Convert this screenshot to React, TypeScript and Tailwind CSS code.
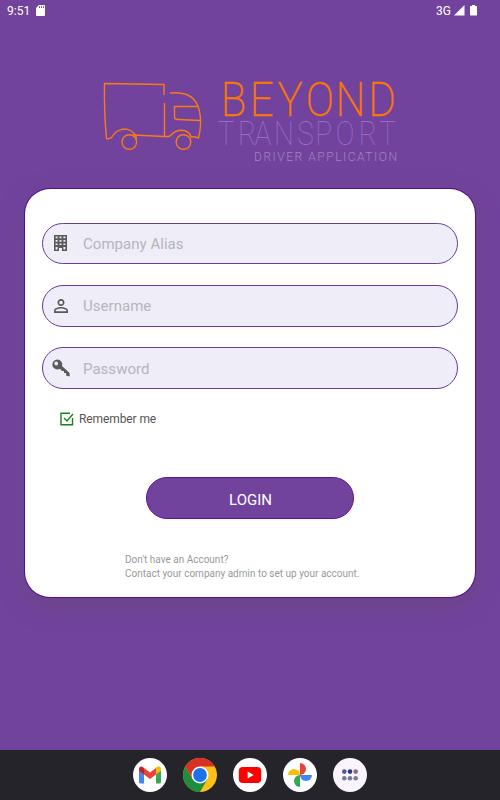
import type { ReactNode } from "react";

const fields: { label: string; type: string; icon: ReactNode }[] = [
  {
    label: "Company Alias",
    type: "text",
    icon: (
      <svg viewBox="0 0 13 16" className="h-4 w-[13px]">
        <path
          fillRule="evenodd"
          fill="#5a5a5a"
          d="M0 0h13v16H8v-3H5v3H0zM1.6 1.6v1.7h2V1.6zm3.9 0v1.7h2V1.6zm3.9 0v1.7h2V1.6zM1.6 5v1.7h2V5zm3.9 0v1.7h2V5zm3.9 0v1.7h2V5zM1.6 8.4v1.7h2V8.4zm3.9 0v1.7h2V8.4zm3.9 0v1.7h2V8.4zM1.6 12v2.4h2V12zm7.8 0v2.4h2V12z"
        />
      </svg>
    ),
  },
  {
    label: "Username",
    type: "text",
    icon: (
      <svg viewBox="4 4 16 16" className="h-[14px] w-[14px]" fill="#5a5a5a">
        <path d="M12 5.9a2.1 2.1 0 1 1 0 4.2 2.1 2.1 0 0 1 0-4.2m0 9c2.97 0 6.1 1.46 6.1 2.1v1.1H5.9V17c0-.64 3.13-2.1 6.1-2.1M12 4C9.79 4 8 5.79 8 8s1.79 4 4 4 4-1.79 4-4-1.79-4-4-4m0 9c-2.67 0-8 1.34-8 4v3h16v-3c0-2.66-5.33-4-8-4" />
      </svg>
    ),
  },
  {
    label: "Password",
    type: "password",
    icon: (
      <svg viewBox="0 0 18 18" className="h-[18px] w-[18px]">
        <path
          fillRule="evenodd"
          fill="#5a5a5a"
          d="M5.300.4a5 5 0 1 0 .1 10c.9 0 1.700-.2 2.400-.6l2.200 2.200h2v2h2l.3 2.800 3.300.6v-3.300L10 6.900A5 5 0 0 0 5.300.4M4.200 2.600a1.900 1.900 0 1 1 0 3.800 1.900 1.900 0 0 1 0-3.800"
        />
      </svg>
    ),
  },
];

function StatusBar() {
  return (
    <div className="flex h-[21px] items-center justify-between pr-[22px] pl-[7px] text-[12px] leading-5 text-white">
      <div className="flex items-center gap-[6px]">
        <span>9:51</span>
        <svg viewBox="0 0 9 11" className="h-[11px] w-[9px]">
          <path
            fill="#fff"
            fillRule="evenodd"
            d="M3 0h5a1 1 0 0 1 1 1v9a1 1 0 0 1-1 1H1a1 1 0 0 1-1-1V3zM3 1.300v1.800h1V1.300zm2 0v1.800h1V1.300zm2 0v1.800h1V1.300z"
          />
        </svg>
      </div>
      <div className="flex items-center">
        <span>3G</span>
        <svg viewBox="0 0 24 11" className="ml-[3px] h-[11px] w-6" fill="#fff">
          <path d="M0 10.500 10.500 0v10.500z" />
          <path d="M18 0h3v1h1.500q.5 0 .5.500v8.500q0 .5-.5.500h-6q-.5 0-.5-.5V1.500q0-.5.5-.5H18z" />
        </svg>
      </div>
    </div>
  );
}

function Logo() {
  return (
    <svg viewBox="96 74 308 94" className="ml-24 h-[94px] w-[308px] overflow-visible">
      <g fill="none" stroke="#f87a18" strokeWidth="1.400" strokeLinecap="round" strokeLinejoin="round">
        <path d="M164 94.500V84.500L104.500 83.500Q104 112 106.500 138.500Q109.500 139.500 112 137C116 130 124 127 130.500 130.500Q135 133 136.500 138" />
        <path d="M164.500 103.500V136.500L133 135" />
        <circle cx="129.300" cy="142" r="7.300" />
        <path d="M164.500 136.500H169C173 134 174 130.500 181 130.300C187 130.500 190 133 191 137C194 136 197 137.500 198.500 138C202 124 201.500 108 193.500 99C187.500 93 180 92 170.500 93" />
        <path d="M198 106.500H174.500V117Q174.500 119.500 178 119.500L200 120.500" />
        <circle cx="183.500" cy="142" r="7.300" />
      </g>
      <g fontFamily="Roboto, sans-serif">
        <text
          transform="translate(216 0) scale(.86 1)"
          x="5.400 39.200 71.500 104.500 139 177"
          y="116"
          fontSize="49"
          fontWeight="200"
          fill="#fb7607"
          stroke="#fb7607"
          strokeWidth=".3"
        >
          BEYOND
        </text>
        <text
          transform="translate(216 0) scale(.82 1)"
          x="2 26.800 47 70.700 99 121 146 174 199"
          y="145.500"
          fontSize="34"
          fontWeight="100"
          fill="#9a6bc9"
        >
          TRANSPORT
        </text>
        <text x="254" y="161" fontSize="12" fontWeight="300" fill="#a085be" textLength="143">
          DRIVER APPLICATION
        </text>
      </g>
    </svg>
  );
}

function LoginCard() {
  return (
    <form className="mx-[25px] mt-[21px] flex h-[408px] flex-col rounded-[25px] bg-white px-[17px] pt-[33.500px] shadow-[0_0_0_1px_#560b91,0_8px_22px_#6b4684]">
      <div className="flex flex-col gap-[20.900px]">
        {fields.map((field) => (
          <label
            key={field.label}
            className="flex h-[41.600px] items-center rounded-full border border-[#6a3aa0] bg-[#efedf8]"
          >
            <span className="flex w-[35px] items-center justify-center">{field.icon}</span>
            <input
              type={field.type}
              placeholder={field.label}
              className="ml-[5px] w-72 bg-transparent pt-px text-[15px] tracking-[0.03px] text-gray-600 outline-none placeholder:text-[#b6b5b9]"
            />
          </label>
        ))}
      </div>

      <div className="mt-[22.300px] ml-[18px] flex h-4 items-center gap-[5px] text-[12px] tracking-[-0.1px] text-[#555]">
        <svg viewBox="0 0 14 14" className="h-[14px] w-[14px]" fill="none" stroke="#188018" strokeWidth="1.400">
          <path d="M10 1.200H1v11.600h11.500V6" />
          <path d="m4 6 3 3 6-7" />
        </svg>
        <span>Remember me</span>
      </div>

      <button
        type="button"
        className="mt-[50px] h-[42px] w-[208px] self-center rounded-full border border-[#5c1598] bg-[#71439d] pt-[3px] pl-px text-[15px] text-white"
      >
        LOGIN
      </button>

      <div className="mt-[34px] ml-[83px] text-[10px] leading-[14px] text-[#999]">
        <p>Don't have an Account?</p>
        <p>Contact your company admin to set up your account.</p>
      </div>
    </form>
  );
}

function GmailIcon() {
  return (
    <svg viewBox="0 0 34 34" className="h-[34px] w-[34px]">
      <circle cx="17" cy="17" r="17" fill="#fff" />
      <path fill="#4285f4" d="M6 12v12a1.500 1.500 0 0 0 1.500 1.500H11V15z" />
      <path fill="#34a853" d="M23 15v10.500h3.500A1.500 1.500 0 0 0 28 24V12z" />
      <path fill="#fbbc04" d="M23 10v6.500l5-3.700V11c0-2.500-2.500-3.500-4.500-2z" />
      <path fill="#ea4335" d="M11 16.500V10l6 4.500 6-4.500v6.500L17 21z" />
      <path fill="#c5221f" d="M6 11v1.800l5 3.700V10l-1-.8C8 7.800 6 9 6 11" />
    </svg>
  );
}

function ChromeIcon() {
  return (
    <svg viewBox="0 0 34 34" className="h-[34px] w-[34px]">
      <circle cx="17" cy="17" r="17" fill="#fbc116" />
      <path fill="#1e8e3e" d="M2.280 8.500A17 17 0 0 0 17 34l7.360-12.750L17 17 9.640 21.250z" />
      <path fill="#d93025" d="M2.280 8.500a17 17 0 0 1 29.440 0H17v8.500l-7.360 4.250z" />
      <circle cx="17" cy="17" r="8.500" fill="#fff" />
      <circle cx="17" cy="17" r="6.900" fill="#1a73e8" />
    </svg>
  );
}

function YoutubeIcon() {
  return (
    <svg viewBox="0 0 34 34" className="h-[34px] w-[34px]">
      <circle cx="17" cy="17" r="17" fill="#fff" />
      <rect x="5.800" y="9" width="22.400" height="16" rx="4" fill="#f00" />
      <path fill="#fff" d="m14.700 13.600 6 3.400-6 3.400z" />
    </svg>
  );
}

function PhotosIcon() {
  return (
    <svg viewBox="0 0 34 34" className="h-[34px] w-[34px]">
      <circle cx="17" cy="17" r="17" fill="#fff" />
      <path fill="#ea4335" d="M17 5a6 6 0 0 1 0 12z" />
      <path fill="#4285f4" d="M29 17a6 6 0 0 1-12 0z" />
      <path fill="#34a853" d="M17 29a6 6 0 0 1 0-12z" />
      <path fill="#fbbc04" d="M5 17a6 6 0 0 1 12 0z" />
    </svg>
  );
}

function AppsIcon() {
  return (
    <svg viewBox="0 0 34 34" className="h-[34px] w-[34px]">
      <circle cx="17" cy="17" r="17" fill="#faf5fd" />
      <circle cx="11.300" cy="13.600" r="2.300" fill="#4a5791" />
      <circle cx="17" cy="13.600" r="2.300" fill="#2c3789" />
      <circle cx="22.700" cy="13.600" r="2.300" fill="#8d678d" />
      <circle cx="11.300" cy="20.300" r="2.300" fill="#777b94" />
      <circle cx="17" cy="20.300" r="2.300" fill="#777b94" />
      <circle cx="22.700" cy="20.300" r="2.300" fill="#777b94" />
    </svg>
  );
}

export default function App() {
  return (
    <div className="flex h-[800px] w-[500px] flex-col overflow-hidden bg-[#71439d] font-['Roboto',sans-serif]">
      <StatusBar />
      <div className="mt-[53px]">
        <Logo />
      </div>
      <LoginCard />
      <nav className="mt-auto flex h-[50px] items-center justify-center gap-4 bg-[#25242a]">
        <GmailIcon />
        <ChromeIcon />
        <YoutubeIcon />
        <PhotosIcon />
        <AppsIcon />
      </nav>
    </div>
  );
}
